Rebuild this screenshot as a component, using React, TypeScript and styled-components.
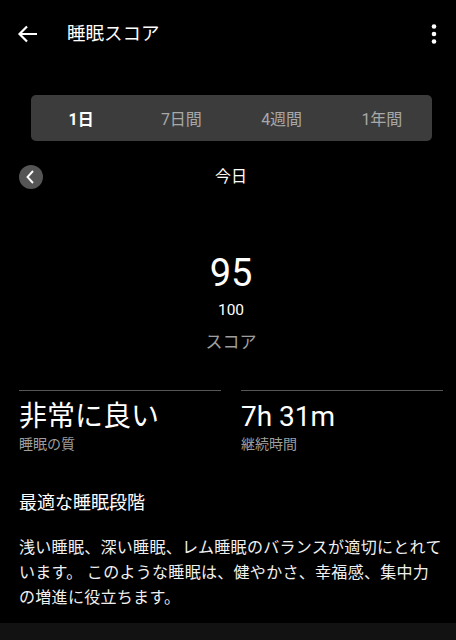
import React, { useState } from 'react';
import styled, { createGlobalStyle } from 'styled-components';

const GlobalStyle = createGlobalStyle`
  html, body {
    margin: 0;
    padding: 0;
    background: #000000;
  }
  body {
    font-family: Roboto, "Noto Sans CJK JP", sans-serif;
    color: #ffffff;
  }
`;

const Page = styled.div`
  width: 456px;
  height: 640px;
  display: flex;
  flex-direction: column;
  background: #000000;
  overflow: hidden;
`;

const Main = styled.main`
  flex: 1;
  display: flex;
  flex-direction: column;
`;

const Header = styled.header`
  height: 68px;
  display: flex;
  align-items: center;
  padding: 0 10px 0 16px;
`;

const IconButton = styled.button`
  width: 24px;
  height: 24px;
  padding: 0;
  border: 0;
  background: none;
  color: #ffffff;
  display: flex;
  align-items: center;
  justify-content: center;
`;

const Title = styled.h1`
  flex: 1;
  margin: 0 0 0 27px;
  font-size: 18.5px;
  font-weight: 400;
  line-height: 24px;
`;

const Tabs = styled.div`
  margin: 27px 24px 0 31px;
  height: 46px;
  border-radius: 5px;
  background: #3c3c3c;
  display: grid;
  grid-template-columns: repeat(4, 1fr);
`;

const Tab = styled.button<{ $active: boolean }>`
  border: 0;
  background: none;
  padding: 0;
  font-family: inherit;
  font-size: 16px;
  font-weight: ${(p) => (p.$active ? 700 : 400)};
  color: ${(p) => (p.$active ? '#ffffff' : '#a8a8a8')};
`;

const DateRow = styled.div`
  margin-top: 24px;
  padding: 0 19px;
  display: grid;
  grid-template-columns: 24px 1fr 24px;
  align-items: center;
  height: 24px;
`;

const PrevButton = styled.button`
  width: 24px;
  height: 24px;
  border-radius: 50%;
  border: 0;
  padding: 0;
  background: #555555;
  display: flex;
  align-items: center;
  justify-content: center;
`;

const DateLabel = styled.div`
  text-align: center;
  font-size: 16px;
  line-height: 24px;
  padding-left: 6px;
`;

const Score = styled.section`
  margin-top: 62px;
  display: flex;
  flex-direction: column;
  align-items: center;
  padding-left: 6px;
`;

const ScoreValue = styled.div`
  font-size: 38px;
  line-height: 44px;
`;

const ScoreMax = styled.div`
  margin-top: 4px;
  font-size: 15.5px;
  line-height: 22px;
`;

const ScoreLabel = styled.div`
  margin-top: 9px;
  font-size: 17px;
  line-height: 24px;
  color: #9e9e9e;
`;

const Stats = styled.section`
  margin-top: 36px;
  padding: 0 13px 0 19px;
  display: grid;
  grid-template-columns: 1fr 1fr;
  gap: 20px;
`;

const Stat = styled.div`
  border-top: 1px solid #565656;
  padding-top: 9px;
`;

const StatValue = styled.div`
  font-size: 28px;
  line-height: 34px;
`;

const StatLabel = styled.div`
  margin-top: 1px;
  font-size: 14px;
  line-height: 18px;
  color: #9e9e9e;
`;

const Detail = styled.section`
  margin-top: 38px;
  padding: 0 10px 0 19px;
`;

const DetailTitle = styled.h2`
  margin: 0;
  font-size: 18px;
  font-weight: 400;
  line-height: 24px;
`;

const DetailText = styled.p`
  margin: 20px 0 0;
  font-size: 16px;
  line-height: 25px;
  letter-spacing: 0.3px;
  color: #f0f0f0;
`;

const BottomBar = styled.div`
  height: 17px;
  background: #121212;
`;

const tabs = ['1日', '7日間', '4週間', '1年間'];

const App = () => {
  const [tab, setTab] = useState<number>(0);

  return (
    <>
      <GlobalStyle />
      <Page>
        <Main>
          <Header>
            <IconButton aria-label="back">
              <svg width="24" height="24" viewBox="0 0 24 24" fill="none">
                <path
                  d="M21 12H4M11 4.5L3.5 12 11 19.5"
                  stroke="#fff"
                  strokeWidth="2.2"
                />
              </svg>
            </IconButton>
            <Title>睡眠スコア</Title>
            <IconButton aria-label="menu">
              <svg width="24" height="24" viewBox="0 0 24 24" fill="#fff">
                <circle cx="12" cy="4.5" r="2.3" />
                <circle cx="12" cy="12" r="2.3" />
                <circle cx="12" cy="19.5" r="2.3" />
              </svg>
            </IconButton>
          </Header>

          <Tabs>
            {tabs.map((t, i) => (
              <Tab key={t} $active={i === tab} onClick={() => setTab(i)}>
                {t}
              </Tab>
            ))}
          </Tabs>

          <DateRow>
            <PrevButton aria-label="previous">
              <svg width="16" height="16" viewBox="0 0 16 16" fill="none">
                <path d="M10 2L4.5 8 10 14" stroke="#fff" strokeWidth="1.9" />
              </svg>
            </PrevButton>
            <DateLabel>今日</DateLabel>
            <span />
          </DateRow>

          <Score>
            <ScoreValue>95</ScoreValue>
            <ScoreMax>100</ScoreMax>
            <ScoreLabel>スコア</ScoreLabel>
          </Score>

          <Stats>
            <Stat>
              <StatValue>非常に良い</StatValue>
              <StatLabel>睡眠の質</StatLabel>
            </Stat>
            <Stat>
              <StatValue>7h 31m</StatValue>
              <StatLabel>継続時間</StatLabel>
            </Stat>
          </Stats>

          <Detail>
            <DetailTitle>最適な睡眠段階</DetailTitle>
            <DetailText>
              浅い睡眠、深い睡眠、レム睡眠のバランスが適切にとれて
              <br />
              います。 このような睡眠は、健やかさ、幸福感、集中力
              <br />
              の増進に役立ちます。
            </DetailText>
          </Detail>
        </Main>
        <BottomBar />
      </Page>
    </>
  );
};

export default App;
